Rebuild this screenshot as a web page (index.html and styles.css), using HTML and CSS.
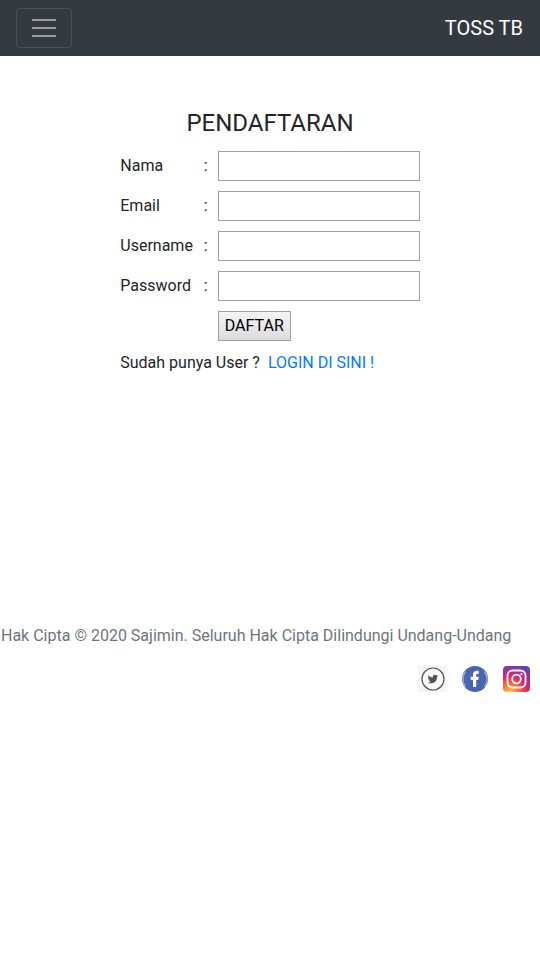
FILE: index.html
```html
<!DOCTYPE html>
<html lang="id">
<head>
<meta charset="utf-8">
<meta name="viewport" content="width=device-width, initial-scale=1">
<title>TOSS TB</title>
<link rel="stylesheet" href="styles.css">
</head>
<body>
<nav class="navbar">
  <button class="toggler" type="button" aria-label="Menu">
    <svg width="30" height="30" viewBox="0 0 30 30" aria-hidden="true"><path d="M4 7h22M4 15h22M4 23h22" stroke="#9a9da0" stroke-width="2" stroke-linecap="square"/></svg>
  </button>
  <a class="brand" href="#">TOSS TB</a>
</nav>
<main class="content">
  <h4 class="title">PENDAFTARAN</h4>
  <form>
    <table class="form-table">
      <tr><td><label for="nama">Nama</label></td><td class="colon">:</td><td><input class="field" id="nama" type="text"></td></tr>
      <tr><td><label for="email">Email</label></td><td class="colon">:</td><td><input class="field" id="email" type="text"></td></tr>
      <tr><td><label for="username">Username</label></td><td class="colon">:</td><td><input class="field" id="username" type="text"></td></tr>
      <tr><td><label for="password">Password</label></td><td class="colon">:</td><td><input class="field" id="password" type="password"></td></tr>
      <tr><td></td><td></td><td><button class="submit" type="submit">DAFTAR</button></td></tr>
      <tr><td colspan="3">Sudah punya User ?&nbsp; <a href="#">LOGIN DI SINI !</a></td></tr>
    </table>
  </form>
</main>
<footer class="footer">
  <p class="copyright">Hak Cipta © 2020 Sajimin. Seluruh Hak Cipta Dilindungi Undang-Undang</p>
  <div class="social">
    <a href="#" aria-label="Twitter">
      <svg width="30" height="30" viewBox="0 0 30 30">
        <rect x="0" y="1" width="29" height="27" fill="#f5f5f5"/>
        <circle cx="15" cy="15" r="11" fill="#fafafa" stroke="#555" stroke-width="1.2"/>
        <path transform="translate(9.6 9.8) scale(.44)" fill="#555" d="M23.95 4.57a10 10 0 0 1-2.82.77 4.96 4.96 0 0 0 2.16-2.72c-.95.56-2 .96-3.13 1.18a4.92 4.92 0 0 0-8.38 4.49C7.69 8.1 4.07 6.13 1.64 3.16a4.92 4.92 0 0 0 1.52 6.57 4.9 4.9 0 0 1-2.23-.61v.06a4.92 4.92 0 0 0 3.95 4.83 5 5 0 0 1-2.21.08 4.94 4.94 0 0 0 4.6 3.42A9.87 9.87 0 0 1 0 19.54a13.99 13.99 0 0 0 7.55 2.21c9.05 0 14-7.5 14-13.98 0-.21 0-.42-.02-.63a9.94 9.94 0 0 0 2.42-2.57z"/>
      </svg>
    </a>
    <a href="#" aria-label="Facebook">
      <svg width="30" height="30" viewBox="0 0 30 30">
        <circle cx="15" cy="15" r="13" fill="#4966ad"/>
        <path d="M5.5 7.5a12 12 0 0 0 0 15M24.5 7.5a12 12 0 0 1 0 15" fill="none" stroke="#a8b6dc" stroke-width="1.2"/>
        <path d="M13 23v-7h-2.300v-3.200h2.300v-2c0-2.700 1.500-4 4-4h1.700v3.200h-1.300c-1 0-1.200.4-1.200 1.300v1.500h2.500l-.4 3.200h-2.100v7z" fill="#fff"/>
      </svg>
    </a>
    <a href="#" aria-label="Instagram">
      <svg width="30" height="30" viewBox="1 0 30 30">
        <defs>
          <radialGradient id="ig" cx=".25" cy="1.05" r="1.15">
            <stop offset="0" stop-color="#ffd35c"/><stop offset=".28" stop-color="#f77737"/><stop offset=".55" stop-color="#dd2a64"/><stop offset=".78" stop-color="#a52b9c"/><stop offset="1" stop-color="#5b45c4"/>
          </radialGradient>
        </defs>
        <rect x="2" y="2" width="27" height="26" rx="4" fill="url(#ig)"/>
        <rect x="6.500" y="6.500" width="18" height="17" rx="5" fill="none" stroke="#fff" stroke-width="1.800"/>
        <circle cx="15.500" cy="15" r="4.300" fill="none" stroke="#fff" stroke-width="1.800"/>
        <circle cx="20.500" cy="10.200" r="1.100" fill="#fff"/>
      </svg>
    </a>
  </div>
</footer>
</body>
</html>
```
FILE: styles.css
```css
* {
  box-sizing: border-box;
}

body {
  margin: 0;
  background: #fff;
  color: #212529;
  font: 16px/24px Roboto, sans-serif;
}

a {
  color: #007bff;
  text-decoration: none;
}

.navbar {
  display: flex;
  align-items: center;
  justify-content: space-between;
  padding: 8px 17px 8px 16px;
  background: #343a40;
}

.toggler {
  display: flex;
  padding: 4px 12px;
  background: transparent;
  border: 1px solid #484e53;
  border-radius: 4px;
}

.brand {
  color: #fff;
  font-size: 20px;
  line-height: 30px;
}

.content {
  min-height: 568px;
  padding-top: 52px;
}

.title {
  margin: 0 0 8px;
  font-size: 24px;
  font-weight: 400;
  line-height: 30px;
  text-align: center;
}

.form-table {
  margin: 0 auto;
  border-collapse: collapse;
}

.form-table td {
  padding: 5px;
}

.form-table .colon {
  padding-left: 6px;
}

.field,
.submit {
  display: block;
  height: 30px;
  border: 1px solid #a0a0a0;
  border-radius: 0;
  font: inherit;
}

.field {
  width: 202px;
  padding: 2px;
  background: #fff;
}

.submit {
  padding: 0 6px;
  background: linear-gradient(#f4f4f4, #dcdcdc);
  color: #000;
}

.footer {
  color: #6c757d;
}

.copyright {
  margin: 0 0 16px;
  padding-left: 1px;
}

.social {
  display: flex;
  justify-content: flex-end;
  gap: 12px;
  padding-right: 8px;
}

.social svg {
  display: block;
}
```
